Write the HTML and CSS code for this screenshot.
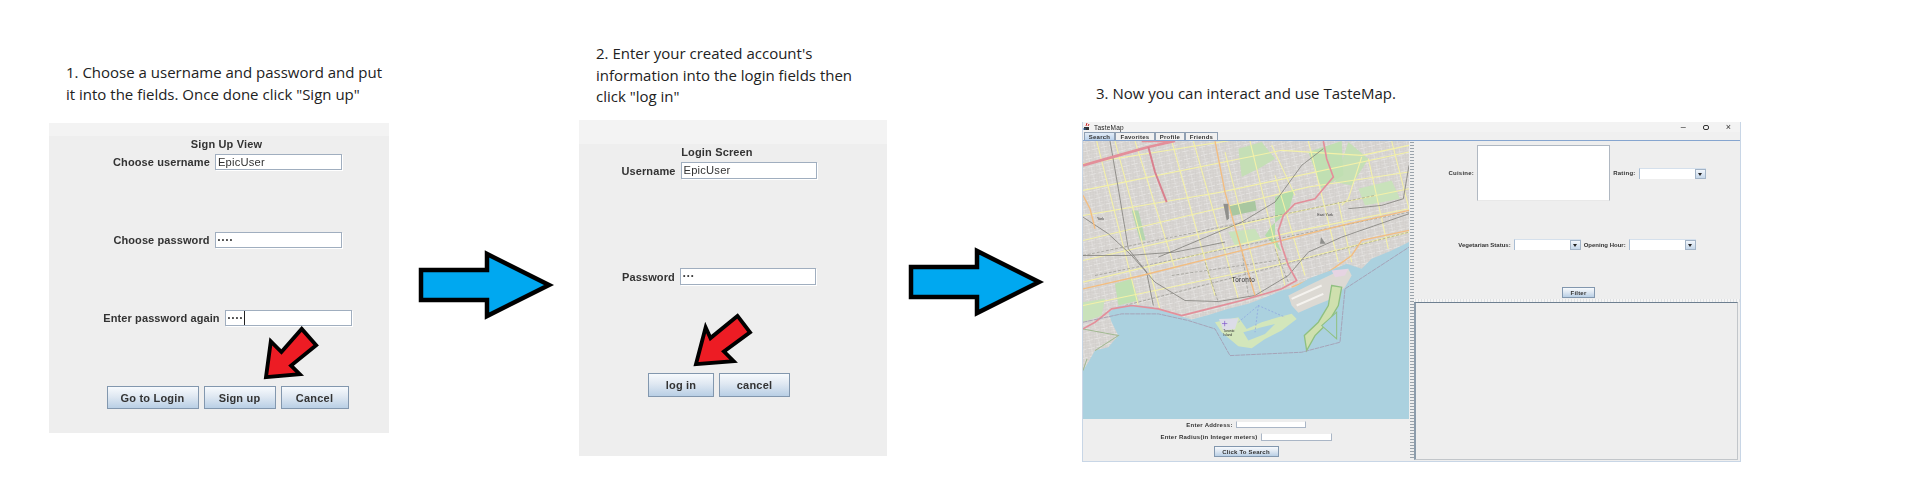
FILE: index.html
```html
<!DOCTYPE html>
<html lang="en">
<head>
<meta charset="utf-8">
<title>TasteMap instructions</title>
<link rel="stylesheet" href="styles.css">
</head>
<body>
<main class="canvas">
  <p class="caption caption-1">1. Choose a username and password and put<br>it into the fields. Once done click "Sign up"</p>
  <section class="shot signup">
    <div class="strip"></div>
    <h2 class="form-title">Sign Up View</h2>
    <div class="rows">
      <div class="row"><span class="label">Choose username</span><span class="field">EpicUser</span></div>
      <div class="row"><span class="label">Choose password</span><span class="field dots">••••</span></div>
      <div class="row"><span class="label">Enter password again</span><span class="field dots"><span class="caret">••••</span></span></div>
    </div>
    <div class="buttons">
      <span class="btn w92">Go to Login</span><span class="btn w72">Sign up</span><span class="btn w68">Cancel</span>
    </div>
  </section>
  <svg class="red red-1" viewBox="0 0 60 56"><path d="M39 3 L54 20 L28 41 L37 50 L2 53 L7 16 L18 27 Z"/></svg>
  <svg class="blue blue-1" viewBox="0 0 134 70"><path d="M2 20 H68 V4 L130 35 L68 66 V50 H2 Z"/></svg>

  <p class="caption caption-2">2. Enter your created account's<br>information into the login fields then<br>click "log in"</p>
  <section class="shot login">
    <div class="strip"></div>
    <h2 class="form-title">Login Screen</h2>
    <div class="rows">
      <div class="row"><span class="label">Username</span><span class="field">EpicUser</span></div>
      <div class="row"><span class="label">Password</span><span class="field dots">•••</span></div>
    </div>
    <div class="buttons">
      <span class="btn w66">log in</span><span class="btn w71">cancel</span>
    </div>
  </section>
  <svg class="red red-2" viewBox="0 0 60 56"><path d="M45 3 L58 20 L31 40 L41 50 L2 53 L12 15 L17 26 Z"/></svg>
  <svg class="blue blue-2" viewBox="0 0 134 70"><path d="M2 20 H68 V4 L130 35 L68 66 V50 H2 Z"/></svg>

  <p class="caption caption-3">3. Now you can interact and use TasteMap.</p>
  <section class="app">
    <header class="app-title">
      <svg class="cup" viewBox="0 0 8 8"><rect x="1" y="4" width="5" height="3" fill="#333"/><path d="M4 0 L3 3 M6 1 L5 3" stroke="#c22" fill="none"/><path d="M0 6 H3" stroke="#36a"/></svg>
      <span class="app-name">TasteMap</span>
      <span class="win-controls"><span>–</span><span class="restore"></span><span>×</span></span>
    </header>
    <nav class="tabs">
      <span class="tab tab-active">Search</span><span class="tab tab-fav">Favorites</span><span class="tab tab-pro">Profile</span><span class="tab tab-fri">Friends</span>
    </nav>
    <div class="app-body">
      <div class="left-pane">
        <svg class="map" viewBox="24 97 978 833" preserveAspectRatio="none">
          <defs>
            <pattern id="grain" width="5" height="5" patternUnits="userSpaceOnUse">
              <rect width="5" height="5" fill="#d9d6d3"/><rect x="1" y="1" width="2" height="2" fill="#c4c1be"/><rect x="3" y="3" width="1" height="1" fill="#e8e5e2"/>
            </pattern>
            <pattern id="streets" width="26" height="24" patternUnits="userSpaceOnUse" patternTransform="rotate(-14)">
              <path d="M0 0 H26 M0 12 H26" stroke="#fff" stroke-width="1.3" stroke-dasharray="14 6"/>
              <path d="M4 0 V24" stroke="#fff" stroke-width="1" stroke-dasharray="9 5"/>
            </pattern>
          </defs>
          <rect x="24" y="97" width="978" height="833" fill="url(#grain)"/>
          <rect x="24" y="97" width="978" height="833" fill="url(#streets)" opacity=".75"/>
          <g fill="#bfe0b2">
            <path d="M170 305 L190 305 L212 395 L195 395 Z" fill="#b5d6ae"/>
            <path d="M462 290 L540 277 L545 305 L470 322 Z" fill="#a9c7a0"/>
            <path d="M120 525 L170 510 L190 575 L130 590 Z"/>
            <path d="M490 120 L560 100 L600 150 L560 175 L500 205 Z" fill="#c5dfb6"/>
            <path d="M820 100 L880 150 L830 230 L780 220 Z" fill="#c5dfb6"/>
            <path d="M850 240 L950 215 L975 270 L870 290 Z" fill="#c9e2bb"/>
            <path d="M600 265 L660 240 L640 310 L590 350 L570 380 L620 430 L600 385 Z" fill="#b4dcaa"/>
            <path d="M24 580 L90 570 L80 620 L24 640 Z" fill="#c9e2bb"/>
            <path d="M460 370 L540 360 L560 395 L480 410 Z" fill="#c9e2bb"/>
            <path d="M700 130 L800 97 L805 200 L740 240 Z" fill="#c0dfb2"/>
          </g>
          <g fill="none" stroke="#f4f1a8" stroke-width="3.2">
            <path d="M65 97 L190 590M120 97 L260 620M180 97 L300 480M290 97 L420 560M355 97 L490 570M450 130 L560 560M525 97 L630 530M600 200 L690 500M700 97 L790 460M790 280 L830 460M880 150 L940 420M950 97 L1002 300"/>
            <path d="M24 165 L500 90M24 245 L620 125L860 140L1002 110M24 320 L440 250L1002 130M24 395 L700 235L1002 190M24 455 L660 310L1002 240M24 520 L650 370L1002 300M24 590 L600 470L1002 370"/>
            <path d="M590 110 L660 260M860 145 L820 270 L800 290"/>
          </g>
          <g fill="none" stroke="#77776f" stroke-width="1.4" stroke-dasharray="9 5">
            <path d="M60 500 L1002 310M150 590 L1002 370M24 440 L900 260M290 500 L640 450M390 460 L430 580M500 420 L520 560M600 420 L640 520"/>
          </g>
          <g fill="none" stroke="#7f7d79" stroke-width="2.4">
            <path d="M24 325 L100 375 L170 440 L240 520 L330 575 L430 578 L540 560 L640 500 L700 430 L800 385 L1002 315"/>
            <path d="M105 97 L130 240 L160 420 L215 490 L235 590"/>
            <path d="M250 445 L500 340 L600 280 L680 170 L745 120"/>
            <path d="M24 440 L160 440 L300 430 L450 400"/>
            <path d="M820 300 L920 290 L985 270 L1002 170"/>
          </g>
          <g fill="none" stroke="#f3bd80" stroke-width="4">
            <path d="M420 97 L450 250 L490 390 L540 560"/>
            <path d="M24 540 L200 500 L400 450 L600 400 L800 350 L1002 305"/>
            <path d="M650 535 L760 490 L830 440 L860 395 L1002 365"/>
            <path d="M24 260 L45 300 L60 360"/>
          </g>
          <path d="M445 285 L460 285 L462 330 L455 335 Z" fill="#8f8f8c"/>
          <path d="M738 385 L752 405 L735 405 Z" fill="#8f8f8c"/>
          <path d="M24 785 L40 760 L60 725 L100 715 L130 680 L110 640 L100 610 L130 592 L170 587 L230 594 L280 612 L350 632 L400 618 L460 600 L520 585 L560 570 L620 545 L660 535 L700 510 L760 487 L815 465 L860 480 L890 450 L950 425 L1002 400 V930 H24 Z" fill="#abd1df"/>
          <path d="M640 560 L700 530 L780 492 L820 480 L830 500 L810 535 L770 570 L720 590 L670 612 L650 590 Z" fill="#dcd9d3"/>
          <path d="M650 570 L740 530M665 590 L745 555" stroke="#f5f3ef" stroke-width="6" fill="none"/>
          <path d="M770 485 L820 480 L810 500 L780 505 Z" fill="#e6d4e2"/>
          <path d="M420 640 L490 625 L515 660 L560 640 L610 625 L650 615 L665 630 L620 665 L570 690 L530 718 L490 712 L440 670 Z" fill="#d3e6bb"/>
          <path d="M505 670 L560 655 L600 645 L570 675 L520 695 Z" fill="#abd1df"/>
          <path d="M432 630 L490 628 L480 660 L445 665 Z" fill="#dcdce8"/>
          <path d="M770 530 L800 535 L790 590 L760 640 L720 680 L695 725 L688 680 L730 640 L760 590 Z" fill="#cfe0ae" stroke="#8fc080" stroke-width="4"/>
          <path d="M740 650 L785 610 L785 690 Z" fill="#abd1df" stroke="#8fc080" stroke-width="3"/>
          <path d="M24 785 L36 750 M24 660 L130 680 L60 725" fill="none" stroke="#a0b890" stroke-width="3"/>
          <path d="M24 660 L60 640 L110 600 L170 590 L250 600 L320 620 L400 600 L500 575 L620 540 L665 515 L640 470 L620 410 L610 365 L625 320 L660 285 L720 270 L745 240 L775 205 L755 150 L745 97" fill="none" stroke="#e38f9a" stroke-width="5"/>
          <path d="M24 170 L130 140 L220 115 L300 97 L200 97" fill="none" stroke="#e38f9a" stroke-width="8"/>
          <path d="M220 115 L240 190 L275 280" fill="none" stroke="#d9808e" stroke-width="6"/>
          <path d="M24 640 L140 615 L250 615 L340 635 L420 660 L465 740 L680 730 L795 700 L810 540 L1002 415" fill="none" stroke="#a49ab0" stroke-width="2.5" stroke-dasharray="14 2"/>
          <path d="M490 640 L550 590 L630 625M550 590 L540 670" fill="none" stroke="#7f8fe0" stroke-width="1.5" stroke-dasharray="6 5"/>
          <path d="M441 644 H457 M449 636 V652" stroke="#7a50c8" stroke-width="2"/>
          <g class="map-text">
            <text x="66" y="333" class="map-s">York</text>
            <text x="727" y="323" class="map-s">East York</text>
            <text x="470" y="520" class="map-l">Toronto</text>
            <text x="445" y="668" class="map-xs">Toronto</text>
            <text x="445" y="682" class="map-xs">Island</text>
          </g>
        </svg>
        <div class="search-form">
          <div class="mini-row mr-1"><span class="mini-label">Enter Address:</span><span class="mini-field mf-70"></span></div>
          <div class="mini-row mr-2"><span class="mini-label">Enter Radius(in Integer meters)</span><span class="mini-field mf-71"></span></div>
          <span class="btn mini-btn">Click To Search</span>
        </div>
      </div>
      <div class="divider"></div>
      <div class="right-pane">
        <div class="filters">
          <div class="filter-row fr-1">
            <span class="mini-label">Cuisine:</span><span class="listbox"></span><span class="mini-label">Rating:</span>
            <span class="combo"><span class="combo-arrow"></span></span>
          </div>
          <div class="filter-row fr-2">
            <span class="mini-label">Vegetarian Status:</span><span class="combo"><span class="combo-arrow"></span></span>
            <span class="mini-label">Opening Hour:</span><span class="combo"><span class="combo-arrow"></span></span>
          </div>
          <span class="btn filter-btn">Filter</span>
        </div>
        <div class="splitter"></div>
        <div class="results"></div>
      </div>
    </div>
  </section>
</main>
</body>
</html>
```
FILE: styles.css
```css
* { box-sizing: border-box; }
html, body { margin: 0; height: 100%; background: #fff; overflow: hidden; }
.canvas { position: relative; width: 1920px; height: 503px; font-family: "Liberation Sans", Arial, sans-serif; }

.caption { position: absolute; margin: 0; font: 15px/21.7px "Open Sans", sans-serif; color: #222; white-space: nowrap; }
.caption-1 { left: 66px; top: 62px; }
.caption-2 { left: 596px; top: 43px; }
.caption-3 { left: 1096px; top: 83px; }

.shot { position: absolute; background: #eee; display: flex; flex-direction: column; filter: blur(.3px); }
.signup { left: 49px; top: 123px; width: 340px; height: 310px; padding-left: 17px; }
.login { left: 579px; top: 120px; width: 308px; height: 336px; padding-right: 28px; }
.strip { background: #f3f3f3; flex: none; }
.signup .strip { height: 13px; margin-left: -17px; }
.login .strip { height: 24px; margin-right: -28px; }
.form-title { margin: 0; text-align: center; font-size: 11px; line-height: 14px; font-weight: 700; color: #333; letter-spacing: .15px; }
.signup .form-title { margin: 1px 2px 3px 0; }
.login .form-title { margin: 1px 4px 3px 0; }

.rows { display: flex; flex-direction: column; }
.signup .rows { gap: 62px; }
.login .rows { gap: 89px; }
.row { display: flex; justify-content: center; align-items: center; gap: 5px; height: 16px; }
.login .row { height: 17px; }
.label { font-size: 11px; font-weight: 700; color: #333; letter-spacing: .1px; white-space: nowrap; }
.field { width: 127px; height: 100%; background: #fff; border: 1px solid #a0aebf; box-shadow: 1px 1px 0 #fff; padding-left: 2px; font-size: 11.2px; line-height: 14px; color: #333; letter-spacing: .2px; }
.login .field { width: 136px; }
.dots { font-size: 7px; font-weight: 700; letter-spacing: 1.6px; }
.caret { display: inline-block; height: 14px; border-right: 1px solid #222; padding-right: 0; }

.buttons { display: flex; justify-content: center; gap: 5px; }
.signup .buttons { margin-top: 60px; }
.login .buttons { margin-top: 88px; }
.btn { display: flex; align-items: center; justify-content: center; height: 23px; font-size: 11px; font-weight: 700; color: #333; letter-spacing: .2px; background: linear-gradient(#f7fafd, #dfe8f2 45%, #b9cfe5); border: 1px solid #8297ae; white-space: nowrap; }
.login .btn { height: 24px; }
.w92 { width: 92px; } .w72 { width: 72px; } .w68 { width: 68px; } .w66 { width: 66px; } .w71 { width: 71px; }

.red, .blue { position: absolute; overflow: visible; }
.red path { fill: #ed1c24; stroke: #000; stroke-width: 4; stroke-linejoin: miter; }
.blue path { fill: #00a8f0; stroke: #000; stroke-width: 4.5; stroke-linejoin: miter; }
.red-1 { left: 264px; top: 326px; width: 58px; height: 54px; }
.red-2 { left: 693px; top: 313px; width: 60px; height: 54px; }
.blue-1 { left: 419px; top: 250px; width: 134px; height: 70px; }
.blue-2 { left: 909px; top: 247px; width: 134px; height: 70px; }

.app { position: absolute; left: 1082px; top: 122px; width: 659px; height: 340px; background: #eee; display: flex; flex-direction: column; border: 1px solid #c8d6e6; border-top: 0; filter: blur(.35px); }
.app-title { flex: none; height: 10px; background: #f3f3f3; display: flex; align-items: center; gap: 3px; font-size: 6.5px; color: #222; }
.cup { width: 8px; height: 8px; }
.app-name { letter-spacing: .2px; }
.win-controls { margin-left: auto; display: flex; align-items: center; gap: 17px; padding-right: 9px; font-size: 9px; color: #333; }
.restore { width: 6px; height: 5px; border: 1.5px solid #333; border-radius: 2px; }
.tabs { flex: none; height: 9px; background: #f0f0f0; display: flex; padding-left: 1px; border-bottom: 1px solid #86a5cf; }
.tab { font-size: 6px; font-weight: 700; color: #333; display: flex; align-items: center; justify-content: center; letter-spacing: .25px; border: 1px solid #8f9fb2; border-bottom: 0; width: 40px; }
.tab-active { width: 31px; background: linear-gradient(#e2ecf7, #bcd3ec); }
.tab-pro { width: 30px; }
.tab-fri { width: 33px; }
.app-body { flex: 1; min-height: 0; display: flex; }
.left-pane { width: 327px; display: flex; flex-direction: column; }
.map { display: block; width: 326px; height: 278px; flex: none; filter: blur(.25px); }
.map-s { font: 11px "Liberation Sans", sans-serif; fill: #333; }
.map-l { font: 19px "Liberation Sans", sans-serif; fill: #333; letter-spacing: 1px; }
.map-xs { font: 10px "Liberation Sans", sans-serif; fill: #333; }
.search-form { flex: 1; display: flex; flex-direction: column; align-items: center; padding-top: 2px; padding-right: 1px; }
.mini-row { display: flex; align-items: center; gap: 3px; }
.mr-1 { height: 7px; }
.mr-2 { height: 8px; margin-top: 5px; }
.mini-label { font-size: 6px; font-weight: 700; color: #333; letter-spacing: .25px; white-space: nowrap; }
.mini-field { height: 100%; background: #fff; border: 1px solid #aab6c6; border-top-color: #eee; }
.mf-70 { width: 70px; } .mf-71 { width: 71px; }
.mini-btn { width: 65px; height: 11px; font-size: 6px; margin-top: 5px; }
.divider { width: 4px; flex: none; margin: 0 0 1px 0; background-image: radial-gradient(#9aa3ab .6px, transparent .8px); background-size: 2px 3px; background-position: 1px 0; }
.right-pane { flex: 1; display: flex; flex-direction: column; min-width: 0; }
.filters { flex: none; height: 158px; display: flex; flex-direction: column; align-items: center; padding-top: 3px; }
.filter-row { display: flex; align-items: center; gap: 3px; }
.fr-1 { height: 56px; margin-top: 1px; }
.fr-2 { height: 11px; margin-top: 38px; }
.fr-2 .mini-label { letter-spacing: 0; }
.listbox { width: 133px; height: 56px; background: #fff; border: 1px solid #b0b8c2; border-bottom-color: #e8e8e8; }
.combo { width: 67px; height: 11px; background: #fff; display: flex; justify-content: flex-end; border-left: 1px solid #a9bdd3; border-top: 1px solid #d5e0ec; }
.combo-arrow { position: relative; width: 11px; background: linear-gradient(#f2f6fb, #c4d6e9); border: 1px solid #a3b4c7; }
.combo-arrow::after { content: ""; position: absolute; left: 2px; top: 3px; border: 2.5px solid transparent; border-top: 3px solid #222; border-bottom: 0; }
.filter-btn { width: 33px; height: 11px; font-size: 6px; margin-top: 37px; margin-left: 3px; }
.splitter { flex: none; height: 3px; background-image: radial-gradient(#9aa3ab .6px, transparent .8px); background-size: 3px 2px; background-color: #f5f5f5; }
.results { flex: 1; background: #eee; border: 1px solid #c2c6ca; border-top: 1px solid #6d7f90; border-left: 2px solid #8c9cab; margin: 0 2px 1px 0; }
```
